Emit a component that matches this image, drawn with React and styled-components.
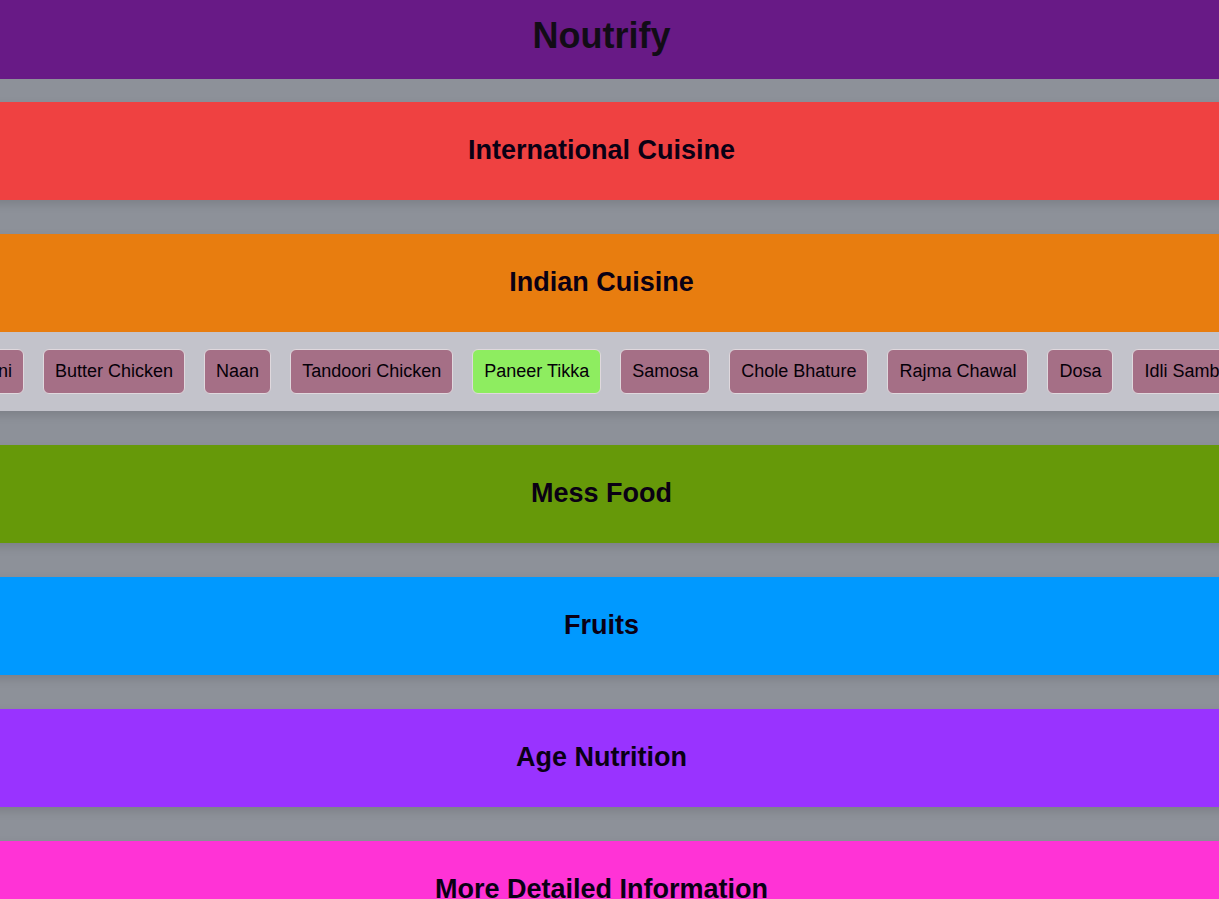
import React, { useLayoutEffect, useRef, useState } from "react";
import styled, { createGlobalStyle } from "styled-components";

const GlobalStyle = createGlobalStyle`
  * { box-sizing: border-box; }
  html { background: #8d9199; scrollbar-width: none; }
  body {
    margin: 0;
    font-family: "Liberation Sans", Arial, sans-serif;
    color: #0a0014;
    overflow-x: hidden;
  }
`;

const Header = styled.header`
  padding: 15px 16px 23px 0;
  background: #681a86;
  text-align: center;
`;

const Brand = styled.h1`
  margin: 0;
  font-size: 36px;
  line-height: 41px;
  color: #120c16;
`;

/* The bands bleed past both sides so that their shadows keep an even edge. */
const Menu = styled.main`
  display: flex;
  flex-direction: column;
  gap: 34px;
  margin: 0 -16px;
  padding: 23px 0 34px;
`;

const Category = styled.section`
  box-shadow: 0 4px 9px rgba(0, 0, 0, 0.12);
`;

const CategoryTitle = styled.h2`
  margin: 0;
`;

const CategoryButton = styled.button`
  display: block;
  width: 100%;
  padding: 33px 16px 34px 0;
  border: 0;
  background: ${({ $color }) => $color};
  color: inherit;
  font: bold 27px/31px "Liberation Sans", Arial, sans-serif;
  text-align: center;
  cursor: pointer;
`;

const DishRow = styled.div`
  display: flex;
  gap: 19px;
  padding: 17px 33px;
  background: #c3c3cb;
  overflow-x: auto;
  scrollbar-width: none;
`;

const Dish = styled.button`
  flex: none;
  padding: 11px;
  border: 1px solid #dfd8dd;
  border-radius: 6px;
  background: ${({ $active }) => ($active ? "#8eed60" : "#a56f86")};
  color: #050008;
  font: 18px/21px "Liberation Sans", Arial, sans-serif;
  white-space: nowrap;
  cursor: pointer;
`;

const indianDishes = [
  "Biryani",
  "Butter Chicken",
  "Naan",
  "Tandoori Chicken",
  "Paneer Tikka",
  "Samosa",
  "Chole Bhature",
  "Rajma Chawal",
  "Dosa",
  "Idli Sambar",
];

const categories = [
  { name: "International Cuisine", color: "#ef4141" },
  { name: "Indian Cuisine", color: "#e87d0f", dishes: indianDishes },
  { name: "Mess Food", color: "#669909" },
  { name: "Fruits", color: "#0099ff" },
  { name: "Age Nutrition", color: "#9933ff" },
  { name: "More Detailed Information", color: "#ff33d6" },
];

function Dishes({ items }) {
  const row = useRef(null);
  const [active, setActive] = useState("Paneer Tikka");

  // Open the list a little way in, so that it is clear that it scrolls.
  useLayoutEffect(() => {
    row.current.scrollLeft = 72;
  }, []);

  return (
    <DishRow ref={row}>
      {items.map((item) => (
        <Dish
          key={item}
          type="button"
          $active={item === active}
          aria-pressed={item === active}
          onClick={() => setActive(item)}
        >
          {item}
        </Dish>
      ))}
    </DishRow>
  );
}

export default function App() {
  const [open, setOpen] = useState("Indian Cuisine");

  return (
    <>
      <GlobalStyle />
      <Header>
        <Brand>Noutrify</Brand>
      </Header>
      <Menu>
        {categories.map(({ name, color, dishes }) => (
          <Category key={name}>
            <CategoryTitle>
              <CategoryButton
                type="button"
                $color={color}
                aria-expanded={open === name}
                onClick={() => setOpen(open === name ? "" : name)}
              >
                {name}
              </CategoryButton>
            </CategoryTitle>
            {dishes && open === name && <Dishes items={dishes} />}
          </Category>
        ))}
      </Menu>
    </>
  );
}
